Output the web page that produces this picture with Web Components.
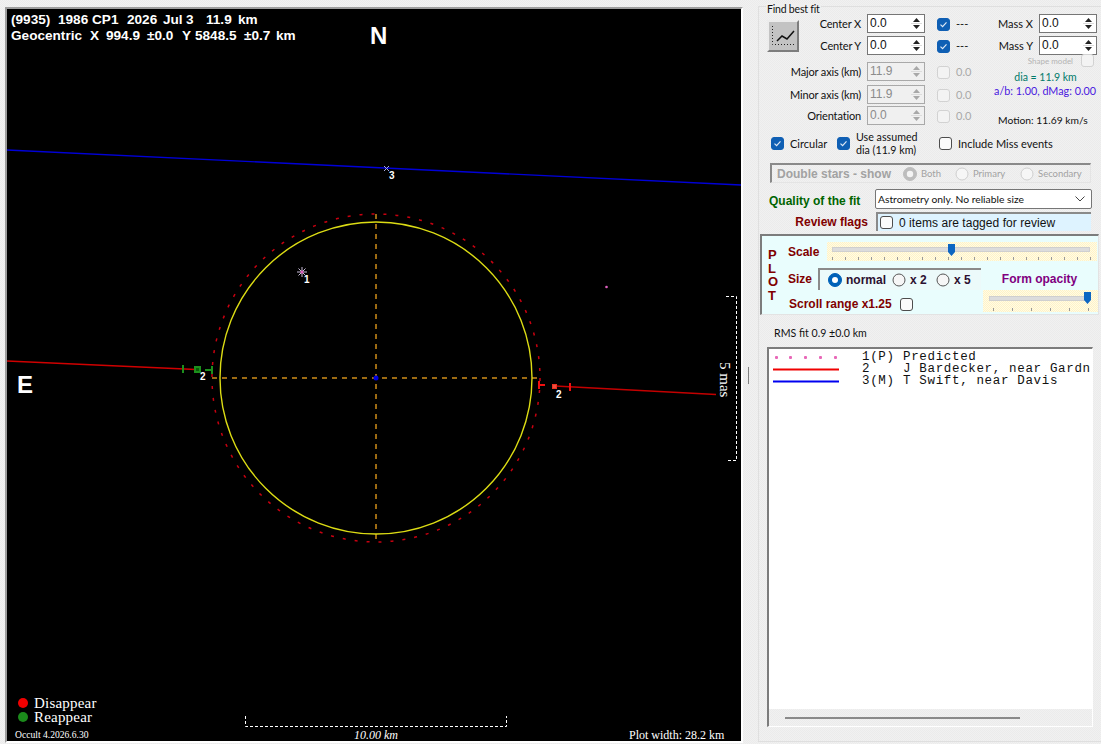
<!DOCTYPE html>
<html>
<head>
<meta charset="utf-8">
<title>Asteroid observations</title>
<style>
  html, body { margin: 0; height: 100%; }
  body { overflow: hidden; font-family: Lato, "Liberation Sans", Arial, sans-serif; }
</style>
</head>
<body>
<occult-form></occult-form>
<script>
// small base class, every element just stamps its markup in an open root
class Base extends HTMLElement {
  constructor() {
    super();
    this.attachShadow({ mode: "open" });
    this.shadowRoot.innerHTML = this.markup();
  }
}

const BOLD = `"Liberation Sans", Arial, sans-serif`;

class WinCheck extends Base {
  markup() {
    const on = this.hasAttribute("checked");
    const off = this.hasAttribute("disabled");
    return `
    <style>
      :host { display: inline-flex; align-items: center; gap: 6px; font-size: 11px; color: #111; }
      .box { width: 13px; height: 13px; box-sizing: border-box; border-radius: 3px; flex: none;
             border: 1px solid #4d4d4d; background: #fbfbfb; display: block; }
      .box.on { background: #0f5fb4; border-color: #0f5fb4; }
      .box.off { background: #f3f3f3; border-color: #d2d2d2; }
      svg { display: block; }
      :host([disabled]) { color: #a9a9a9; }
    </style>
    <span class="box ${on ? "on" : ""} ${off ? "off" : ""}">${on ? `<svg width="11" height="11" viewBox="0 0 11 11"><path d="M2.5 5.6 4.6 7.6 8.5 3.4" fill="none" stroke="#dfe9f5" stroke-width="1.2"/></svg>` : ""}</span><slot></slot>`;
  }
}
customElements.define("win-check", WinCheck);

class WinRadio extends Base {
  markup() {
    const on = this.hasAttribute("checked");
    const off = this.hasAttribute("disabled");
    const ring = off ? (on ? "#bdbdbd" : "#cfcfcf") : (on ? "#0061b8" : "#555");
    const dot = on ? `<circle cx="7" cy="7" r="${off ? 3.2 : 3}" fill="${off ? "#f4f4f4" : "#fff"}"/>` : "";
    return `
    <style>
      :host { display: inline-flex; align-items: center; gap: 4px; font-size: 9.5px; }
      svg { display: block; flex: none; }
    </style>
    <svg width="14" height="14" viewBox="0 0 14 14"><circle cx="7" cy="7" r="${on ? 6.5 : 6}" fill="${on ? ring : "#f6f6f6"}" stroke="${ring}"/>${dot}</svg><slot></slot>`;
  }
}
customElements.define("win-radio", WinRadio);

class SpinBox extends Base {
  markup() {
    const arrow = this.hasAttribute("disabled") ? "#a8a8a8" : "#222";
    return `
    <style>
      :host { display: flex; box-sizing: border-box; width: 58px; height: 19px; background: #fff;
              border: 1px solid #767676; font: 12px/14px "Liberation Sans", Arial, sans-serif; color: #111; }
      :host([disabled]) { border-color: #a9a9a9; background: #f0f0f0; color: #8b8b8b; }
      .val { flex: 1; padding: 1px 0 0 2px; }
      .arrows { width: 16px; display: flex; flex-direction: column; align-items: center; justify-content: center; gap: 1px; }
      .arrows i { display: block; width: 11px; height: 1px; background: #dcdcdc; }
      svg { display: block; }
    </style>
    <span class="val">${this.getAttribute("value")}</span>
    <span class="arrows">
      <svg width="7" height="4"><path d="M0 4 3.5 0 7 4z" fill="${arrow}"/></svg>
      <i></i>
      <svg width="7" height="4"><path d="M0 0 3.5 4 7 0z" fill="${arrow}"/></svg>
    </span>`;
  }
}
customElements.define("spin-box", SpinBox);

class TrackBar extends Base {
  markup() {
    return `
    <style>
      :host { display: block; position: relative; box-sizing: border-box;
              background: repeating-conic-gradient(#fff3c6 0 25%, #fffbe6 0 50%) 0 0/2px 2px; }
      .line { position: absolute; left: var(--inset); right: var(--inset-r, var(--inset)); top: var(--line-y); height: 3px;
              background: #dcdcdc; border: 1px solid #cfcfcf; box-sizing: content-box; }
      .ticks { position: absolute; left: var(--tick-x); right: var(--inset); top: var(--tick-y); height: 3px;
               background: repeating-linear-gradient(90deg, #9a9a9a 0 1px, transparent 1px var(--step)); }
      svg { position: absolute; left: var(--thumb); top: var(--thumb-y); display: block; }
    </style>
    <div class="line"></div>
    <div class="ticks"></div>
    <svg width="7" height="12" viewBox="0 0 7 12"><path d="M0 0H7V8L3.5 12 0 8z" fill="#0d66c2"/></svg>`;
  }
}
customElements.define("track-bar", TrackBar);

class PlotView extends Base {
  markup() {
    const font = `font-family="Liberation Sans, Arial, sans-serif"`;
    const serif = `font-family="Liberation Serif, Times New Roman, serif"`;
    return `
    <style>
      :host { display: block; box-sizing: content-box; width: 734px; height: 732px; margin: 7px 0 0 5px; background: #000;
              border: 2px solid; border-color: #9c9c9c #fff #fff #9c9c9c; flex: none; }
      svg { display: block; }
      text { white-space: pre; }
    </style>
    <svg width="734" height="732" viewBox="7 9 734 732">
      <!-- observed chords -->
      <line x1="7" y1="150" x2="741" y2="185" stroke="#0000d8" stroke-width="1.4"/>
      <line x1="7" y1="361" x2="196" y2="369.5" stroke="#d00000" stroke-width="1.4"/>
      <line x1="555" y1="386" x2="716" y2="394.5" stroke="#c40000" stroke-width="1.4"/>

      <!-- fitted shape -->
      <circle cx="376" cy="378" r="164" fill="none" stroke="#c80010" stroke-width="1.5" stroke-dasharray="3 9"/>
      <line x1="376" y1="214" x2="376" y2="542" stroke="#9c6a12" stroke-width="2" stroke-dasharray="5 5"/>
      <line x1="212" y1="378" x2="540" y2="378" stroke="#9c6a12" stroke-width="2" stroke-dasharray="5 5"/>
      <circle cx="376" cy="378" r="156" fill="none" stroke="#dcdc14" stroke-width="1.4"/>
      <circle cx="376" cy="378" r="2.5" fill="#0000e0"/>

      <!-- event markers -->
      <g stroke="#1c8f1c" stroke-width="2" fill="none">
        <line x1="183" y1="365" x2="183" y2="373"/>
        <rect x="195" y="367" width="5" height="5" fill="#0a5a0a"/>
        <line x1="205" y1="370" x2="212" y2="370"/>
        <line x1="212" y1="366" x2="212" y2="374"/>
      </g>
      <g stroke="#f01010" stroke-width="2" fill="none">
        <line x1="539" y1="381" x2="539" y2="389"/>
        <line x1="539" y1="385" x2="545" y2="385"/>
        <rect x="552.500" y="384.500" width="4" height="4" fill="#e85040" stroke="#f03020" stroke-width="1"/>
        <line x1="570" y1="383" x2="570" y2="391"/>
      </g>
      <g stroke="#c8bcd8" stroke-width="1">
        <line x1="297" y1="272" x2="307" y2="272"/>
        <line x1="302" y1="267" x2="302" y2="277"/>
        <line x1="298.500" y1="268.500" x2="305.500" y2="275.500"/>
        <line x1="305.500" y1="268.500" x2="298.500" y2="275.500"/>
      </g>
      <circle cx="302" cy="272" r="1.500" fill="#e060c0"/>
      <g stroke="#a8a8e0" stroke-width="1">
        <line x1="384" y1="166" x2="389" y2="171"/>
        <line x1="389" y1="166" x2="384" y2="171"/>
      </g>
      <circle cx="606.500" cy="287" r="1.300" fill="#e060c0"/>

      <g ${font} font-size="10" font-weight="bold" fill="#fff">
        <text x="304" y="283">1</text>
        <text x="200" y="380">2</text>
        <text x="556" y="398">2</text>
        <text x="389" y="179">3</text>
      </g>

      <g ${font} font-weight="bold" fill="#fff" font-size="13.6">
        <text y="24"><tspan x="11">(9935)</tspan> <tspan x="58">1986</tspan> <tspan x="92">CP1</tspan>  <tspan x="127">2026</tspan> <tspan x="163">Jul</tspan> <tspan x="186">3</tspan>   <tspan x="206">11.9</tspan> <tspan x="238">km</tspan></text>
        <text y="40"><tspan x="11">Geocentric</tspan>  <tspan x="90">X</tspan>  <tspan x="106">994.9</tspan> <tspan x="147">±0.0</tspan>  <tspan x="182">Y</tspan> <tspan x="195">5848.5</tspan> <tspan x="244">±0.7</tspan> <tspan x="276">km</tspan></text>
      </g>
      <text x="370" y="44" ${font} font-size="24" font-weight="bold" fill="#fff">N</text>
      <text x="17" y="393" ${font} font-size="24" font-weight="bold" fill="#fff">E</text>

      <!-- mas scale, right side -->
      <path d="M726 296.500H736.500V460.500H726" fill="none" stroke="#fff" stroke-dasharray="3 2"/>
      <text transform="translate(720 362) rotate(90)" ${serif} font-size="15" fill="#fff">5 mas</text>

      <!-- legend and km scale -->
      <circle cx="23" cy="703" r="5" fill="#f00000"/>
      <circle cx="23" cy="717" r="5" fill="#1b8a1b"/>
      <g ${serif} font-size="15" letter-spacing=".2" fill="#fff">
        <text x="34" y="708">Disappear</text>
        <text x="34" y="722">Reappear</text>
      </g>
      <text x="15" y="738" ${serif} font-size="9.600" fill="#fff">Occult 4.2026.6.30</text>
      <path d="M245.500 716V726.500H506.500V716" fill="none" stroke="#fff" stroke-dasharray="3 2"/>
      <text x="354" y="739" ${serif} font-size="12" font-style="italic" fill="#fff">10.00 km</text>
      <text x="629" y="739" ${serif} font-size="12" fill="#fff">Plot width: 28.2 km</text>
    </svg>`;
  }
}
customElements.define("plot-view", PlotView);

class FitPanel extends Base {
  markup() {
    return `
    <style>
      :host { display: block; height: 156px; box-sizing: border-box; padding: 7px 0 0 8px; position: relative; font-size: 11px; color: #111; }
      .title { position: absolute; left: 7px; top: -4px; padding: 0 1px; font-size: 10.5px; letter-spacing: -.2px; background: #efefef; }
      .top { display: flex; height: 115px; }
      .grid { display: grid; width: 227px; grid-template-columns: 94px 58px 13px auto;
              grid-template-rows: 22px 26px 23px 21px 21px; column-gap: 6px; align-items: start; }
      .grid > win-check { margin-left: 6px; margin-top: 4px; }
      .lbl { justify-self: end; line-height: 19px; white-space: nowrap; letter-spacing: -.15px; }
      .dash { line-height: 19px; margin-left: 6px; }
      .off { line-height: 19px; margin-left: 6px; color: #a9a9a9; }
      .fitbtn { grid-row: 1 / 3; grid-column: 1; justify-self: start; margin-top: 6px; width: 32px; height: 32px; box-sizing: border-box;
                background: #c3c3c3; border: 2px solid; border-color: #ececec #7d7d7d #7d7d7d #ececec; }
      .fitbtn svg { display: block; }
      .right { width: 103px; display: flex; flex-direction: column; }
      .mass { display: flex; align-items: center; justify-content: flex-end; gap: 6px; height: 19px; }
      .mass + .mass { margin-top: 3px; }
      .shape { display: flex; justify-content: flex-end; align-items: center; gap: 8px; font-size: 8px; color: #b4b4b4; height: 11px; }
      .shape win-check { margin-right: 3px; }
      .dia { text-align: center; margin-top: 5px; font-size: 10.5px; line-height: 13px; color: #007a6a; }
      .ab { text-align: right; font-size: 10.800px; line-height: 13px; color: #4a18e0; padding-right: 1px; white-space: nowrap; }
      .motion { margin-top: 17px; font-size: 10.300px; line-height: 13px; padding-left: 4px; white-space: nowrap; }
      .checks { display: flex; align-items: center; height: 28px; padding-left: 4px; }
      .use { line-height: 13px; font-size: 10.700px; }
    </style>
    <div class="title">Find best fit</div>
    <div class="top">
      <div class="grid">
        <div class="fitbtn"><svg width="28" height="28" viewBox="0 0 28 28">
          <path d="M3.500 4V22.500H27" fill="none" stroke="#222" stroke-dasharray="1 2"/>
          <path d="M8 19 13 14 18 17 25 9" fill="none" stroke="#111" stroke-width="1.500"/>
        </svg></div>
        <span class="lbl" style="grid-row:1;grid-column:1">Center X</span>
        <spin-box value="0.0" style="grid-row:1;grid-column:2"></spin-box>
        <win-check checked style="grid-row:1;grid-column:3"></win-check>
        <span class="dash" style="grid-row:1;grid-column:4">---</span>

        <span class="lbl" style="grid-row:2;grid-column:1">Center Y</span>
        <spin-box value="0.0" style="grid-row:2;grid-column:2"></spin-box>
        <win-check checked style="grid-row:2;grid-column:3"></win-check>
        <span class="dash" style="grid-row:2;grid-column:4">---</span>

        <span class="lbl" style="grid-row:3;grid-column:1">Major axis (km)</span>
        <spin-box disabled value="11.9" style="grid-row:3;grid-column:2"></spin-box>
        <win-check disabled style="grid-row:3;grid-column:3"></win-check>
        <span class="off" style="grid-row:3;grid-column:4">0.0</span>

        <span class="lbl" style="grid-row:4;grid-column:1">Minor axis (km)</span>
        <spin-box disabled value="11.9" style="grid-row:4;grid-column:2"></spin-box>
        <win-check disabled style="grid-row:4;grid-column:3"></win-check>
        <span class="off" style="grid-row:4;grid-column:4">0.0</span>

        <span class="lbl" style="grid-row:5;grid-column:1">Orientation</span>
        <spin-box disabled value="0.0" style="grid-row:5;grid-column:2"></spin-box>
        <win-check disabled style="grid-row:5;grid-column:3"></win-check>
        <span class="off" style="grid-row:5;grid-column:4">0.0</span>
      </div>
      <div class="right">
        <div class="mass"><span>Mass X</span><spin-box value="0.0"></spin-box></div>
        <div class="mass"><span>Mass Y</span><spin-box value="0.0"></spin-box></div>
        <div class="shape"><span>Shape model</span><win-check disabled></win-check></div>
        <div class="dia">dia = 11.9 km</div>
        <div class="ab">a/b: 1.00, dMag: 0.00</div>
        <div class="motion">Motion: 11.69 km/s</div>
      </div>
    </div>
    <div class="checks">
      <win-check checked style="width:66px">Circular</win-check>
      <win-check checked style="width:102px"><span class="use">Use assumed<br>dia (11.9 km)</span></win-check>
      <win-check>Include Miss events</win-check>
    </div>`;
  }
}
customElements.define("fit-panel", FitPanel);

class StarsGroup extends Base {
  markup() {
    return `
    <style>
      :host { display: flex; align-items: center; box-sizing: border-box; width: 321px; height: 20px; margin-left: 11px;
              border: 1px solid #e4e4e4; border-top: 2px solid #8a8a8a; border-left: 2px solid #8a8a8a;
              padding-left: 5px; color: #a2a2a2; white-space: nowrap; }
      b { width: 126px; font: bold 12px ${BOLD}; flex: none; }
      win-radio { flex: none; }
    </style>
    <b>Double stars - show</b>
    <win-radio checked disabled style="width:52px">Both</win-radio>
    <win-radio disabled style="width:65px">Primary</win-radio>
    <win-radio disabled>Secondary</win-radio>`;
  }
}
customElements.define("stars-group", StarsGroup);

class QualityRows extends Base {
  markup() {
    return `
    <style>
      :host { display: block; margin-top: 6px; font: 12px ${BOLD}; }
      .row { display: flex; align-items: center; }
      .q { width: 116px; padding-left: 10px; box-sizing: border-box; color: #006400; font-weight: bold; white-space: nowrap; margin-top: 4px; }
      .r { width: 116px; padding-right: 7px; box-sizing: border-box; text-align: right; color: #800000; font-weight: bold; }
      .select { width: 217px; height: 20px; box-sizing: border-box; background: #fff; border: 1px solid #767676; border-radius: 2px;
                display: flex; align-items: center; justify-content: space-between; padding: 0 6px 0 2px;
                font: 10.300px Lato, sans-serif; color: #111; }
      .select svg { display: block; }
      .review { margin-top: 3px; }
      .flag { width: 215px; height: 19px; margin-left: 1px; box-sizing: border-box; background: #def3ff;
              border-top: 2px solid #8a8a8a; border-left: 2px solid #8a8a8a; padding-left: 2px; display: flex; align-items: center; }
      win-check { font-size: 12px; letter-spacing: .05px; }
    </style>
    <div class="row">
      <span class="q">Quality of the fit</span>
      <div class="select"><span>Astrometry only. No reliable size</span>
        <svg width="10" height="6"><path d="M.5.5 5 5 9.500.5" fill="none" stroke="#444"/></svg></div>
    </div>
    <div class="row review">
      <span class="r">Review flags</span>
      <div class="flag"><win-check>0 items are tagged for review</win-check></div>
    </div>`;
  }
}
customElements.define("quality-rows", QualityRows);

class PlotOptions extends Base {
  markup() {
    return `
    <style>
      :host { display: flex; box-sizing: border-box; width: 339px; height: 81px; margin: 3px 0 0 1px; background: #e9fdfd;
              border: 1px solid #e3e3e3; border-top: 2px solid #7c7c7c; border-left: 2px solid #7c7c7c;
              font: bold 12px ${BOLD}; color: #800000; white-space: nowrap; }
      .side { width: 26px; flex: none; padding: 12px 0 0 6px; box-sizing: border-box; line-height: 13.500px; font-size: 13px; }
      .rows { flex: 1; display: flex; flex-direction: column; padding-top: 6px; }
      .row { display: flex; align-items: center; }
      .scale { height: 19px; }
      .scale span { width: 39px; flex: none; }
      .scale track-bar { width: 270px; height: 19px; --inset: 5px; --inset-r: 7px; --line-y: 5px; --tick-x: 5px; --tick-y: 15px; --step: 12.900px; --thumb: 121px; --thumb-y: 2px; }
      .size { height: 22px; margin-top: 7px; }
      .size > span { width: 30px; flex: none; }
      .group { width: 163px; height: 22px; box-sizing: border-box; flex: none; border-top: 2px solid #8a8a8a; border-left: 2px solid #8a8a8a;
               background: #ecfafa; display: flex; align-items: center; padding-left: 8px; color: #2d1030; }
      .group win-radio { font-size: 12px; }
      .size > .opacity { flex: 1; width: auto; text-align: center; color: #800080; }
      .scroll { height: 22px; }
      .scroll > span { margin: 6px 0 0 1px; }
      .scroll win-check { margin: 6px 0 0 8px; }
      .scroll track-bar { margin-left: auto; width: 115px; height: 22px; --inset: 6px; --inset-r: 9px; --line-y: 6px; --tick-x: 10px; --tick-y: 18px; --step: 19px; --thumb: 101px; --thumb-y: 2px; }
    </style>
    <div class="side">P<br>L<br>O<br>T</div>
    <div class="rows">
      <div class="row scale"><span>Scale</span><track-bar></track-bar></div>
      <div class="row size">
        <span>Size</span>
        <div class="group">
          <win-radio checked style="width:64px">normal</win-radio>
          <win-radio style="width:44px">x 2</win-radio>
          <win-radio>x 5</win-radio>
        </div>
        <span class="opacity">Form opacity</span>
      </div>
      <div class="row scroll">
        <span>Scroll range x1.25</span><win-check></win-check>
        <track-bar></track-bar>
      </div>
    </div>`;
  }
}
customElements.define("plot-options", PlotOptions);

class ObsList extends Base {
  markup() {
    const sample = (c) => `<svg width="66" height="3"><rect width="66" height="2" y=".5" fill="${c}"/></svg>`;
    const dots = `<svg width="66" height="3"><g fill="#e868b8">${[3, 17, 32, 47, 62].map(x => `<rect x="${x - 1}" width="3" height="3" rx="1"/>`).join("")}</g></svg>`;
    return `
    <style>
      :host { display: flex; flex-direction: column; box-sizing: border-box; width: 326px; height: 380px; margin: 7px 0 0 8px;
              border-top: 2px solid #7c7c7c; border-left: 2px solid #7c7c7c; border-right: 1px solid #fff; border-bottom: 1px solid #fff; }
      .body { flex: 1; background: #fff; padding-top: 2px; overflow: hidden; }
      .row { display: grid; grid-template-columns: 66px 64px auto; padding-left: 4px; height: 12px; align-items: center;
             font: 12.500px/12px "Liberation Mono", "Courier New", monospace; letter-spacing: .66px; color: #111; white-space: pre; }
      svg { display: block; }
      .bar { height: 17px; flex: none; display: flex; align-items: center; padding-left: 16px; }
      .bar i { display: block; width: 235px; height: 2px; background: #8a8a8a; }
      .row span:nth-child(2) { padding-left: 23px; }
    </style>
    <div class="body">
      <div class="row">${dots}<span>1(P)</span><span>Predicted</span></div>
      <div class="row">${sample("#f00000")}<span>2</span><span>J Bardecker, near Gardn</span></div>
      <div class="row">${sample("#0000f0")}<span>3(M)</span><span>T Swift, near Davis</span></div>
    </div>
    <div class="bar"><i></i></div>`;
  }
}
customElements.define("obs-list", ObsList);

class SidePanel extends Base {
  markup() {
    return `
    <style>
      :host { display: block; width: 343px; height: 736px; margin-top: 6px; flex: none; box-sizing: border-box;
              border: 1px solid #dfdfdf; border-right: 0; }
      .rms { margin: 11px 0 0 15px; height: 14px; line-height: 14px; font-size: 10.600px; color: #111; }
    </style>
    <fit-panel></fit-panel>
    <stars-group></stars-group>
    <quality-rows></quality-rows>
    <plot-options></plot-options>
    <div class="rms">RMS fit 0.9 ±0.0 km</div>
    <obs-list></obs-list>`;
  }
}
customElements.define("side-panel", SidePanel);

class OccultForm extends Base {
  markup() {
    return `
    <style>
      :host { display: flex; width: 1101px; height: 744px; overflow: hidden;
              background: repeating-conic-gradient(#f1f1f1 0 25%, #ebebeb 0 50%) 0 0/2px 2px; }
      .split { width: 15px; flex: none; padding-top: 367px; box-sizing: border-box; }
      .split i { display: block; width: 1px; height: 17px; margin-left: 5px; background: #808080; }
    </style>
    <plot-view></plot-view>
    <div class="split"><i></i></div>
    <side-panel></side-panel>`;
  }
}
customElements.define("occult-form", OccultForm);
</script>
</body>
</html>
